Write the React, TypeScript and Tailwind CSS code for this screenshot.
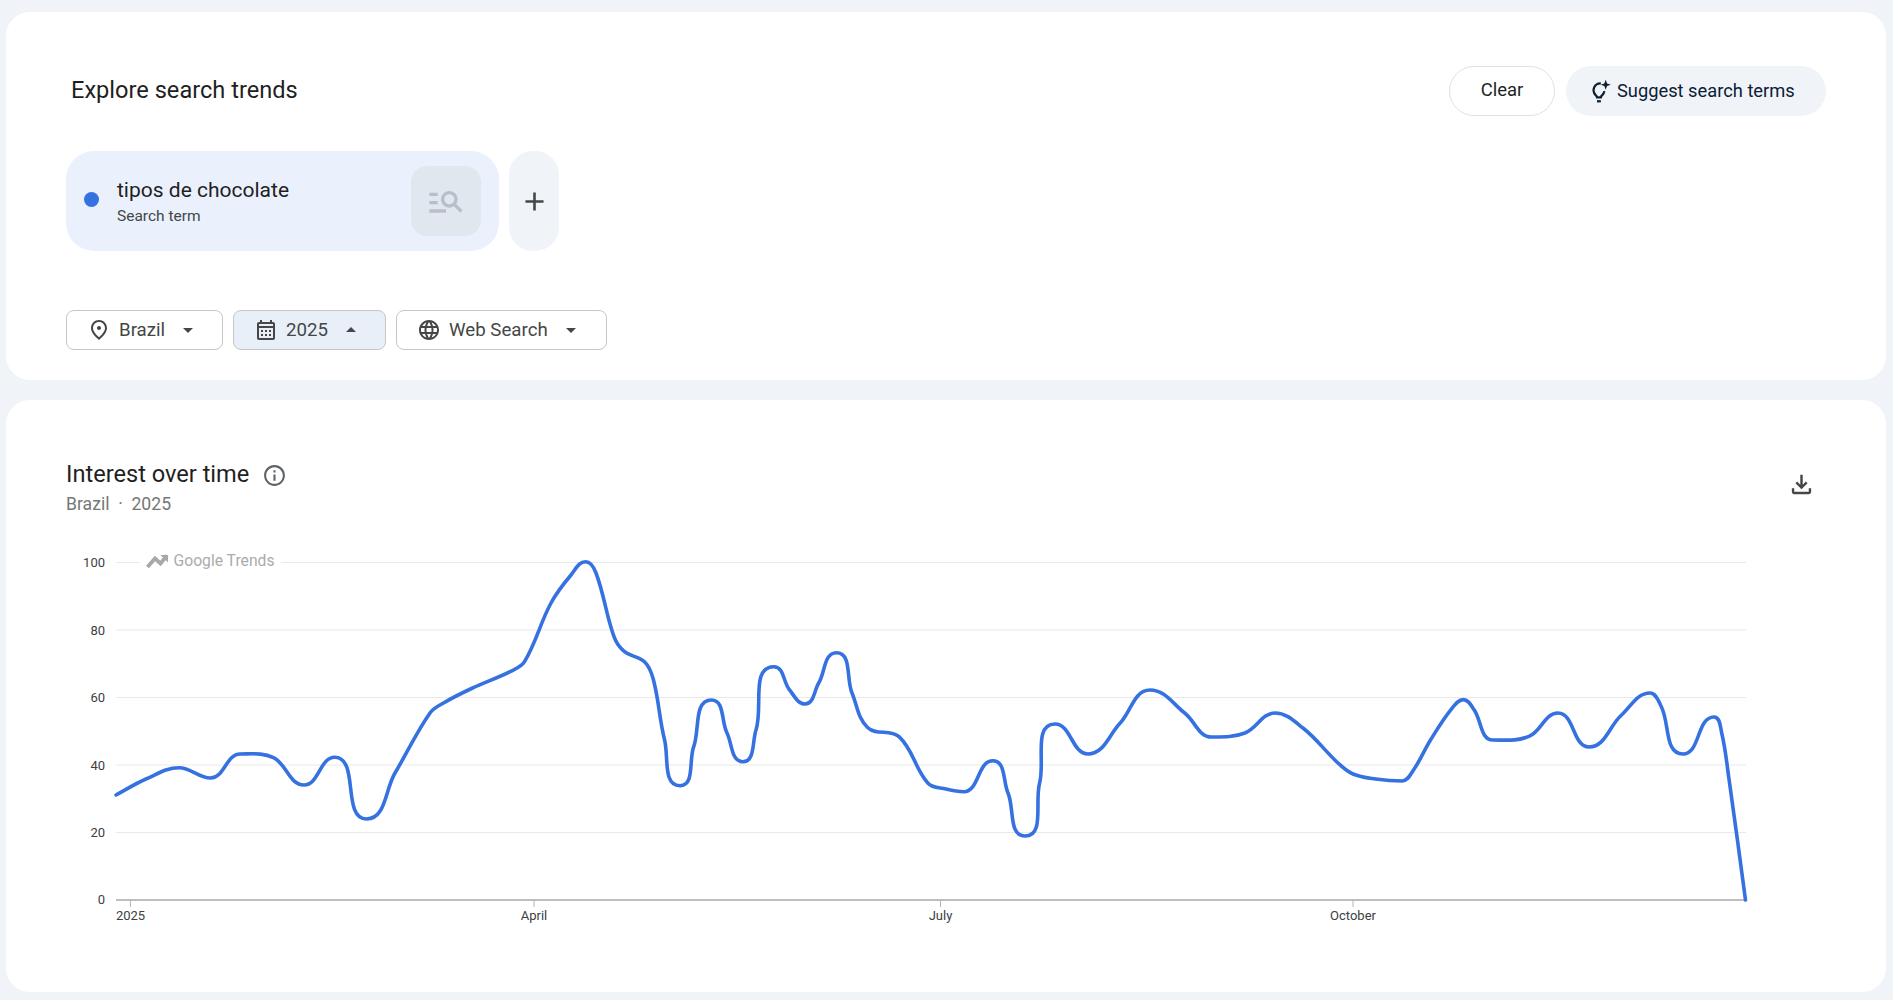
const FONT = "font-['Roboto',sans-serif]";

type Pt = [number, number];

// chart line, read off the reference in page coordinates
const points: Pt[] = [
  [116, 795], [146, 779], [179, 767.7], [210.6, 778], [240, 754], [273.5, 757.7], [304, 785], [334.7, 757.3],
  [366.5, 819], [395, 773], [430, 713], [444, 702.7], [472.6, 688], [510, 671.7], [524.5, 661.7], [551, 603],
  [571, 575], [585.7, 561.7], [596, 573], [614, 636.7], [624.5, 651.7], [644.5, 661.7], [653.5, 680], [664.6, 740],
  [680, 785.7], [693.7, 746.7], [711.5, 700], [727, 733], [742.8, 761.7], [756, 730], [774, 666.7], [789.6, 690],
  [805, 704], [818.7, 683], [836.5, 652.7], [852, 693], [867.8, 727.7], [899, 736.7], [928, 783.3], [946, 789],
  [963.8, 791.7], [992.8, 760.7], [1008, 793], [1025, 836], [1039.6, 783], [1055, 724], [1088, 754], [1120, 723.3],
  [1150, 690], [1184.7, 713], [1211.5, 737], [1245, 733], [1275, 713], [1303, 728], [1338, 763], [1353, 774],
  [1375.6, 779], [1402, 781], [1413.5, 770], [1430.5, 740], [1451, 709.6], [1463.4, 699.6], [1474, 709.6], [1493, 740],
  [1529, 736.4], [1558, 713], [1589, 747], [1621.5, 715], [1650, 693], [1661, 706], [1683, 754], [1714, 717],
  [1721.7, 733], [1729, 779], [1745.5, 900],
];

function tangent(pts: Pt[], i: number): Pt {
  const a = pts[Math.max(i - 1, 0)];
  const b = pts[i];
  const c = pts[Math.min(i + 1, pts.length - 1)];
  // flat at peaks and dips, the way the chart rounds them
  if (i > 0 && i < pts.length - 1 && (b[1] - a[1]) * (c[1] - b[1]) < 0) return [1, 0];
  const dx = c[0] - a[0];
  const dy = c[1] - a[1];
  const len = Math.hypot(dx, dy);
  return [dx / len, dy / len];
}

function smoothPath(pts: Pt[]) {
  let d = `M${pts[0][0]} ${pts[0][1]}`;
  for (let i = 0; i < pts.length - 1; i++) {
    const p1 = pts[i];
    const p2 = pts[i + 1];
    const t1 = tangent(pts, i);
    const t2 = tangent(pts, i + 1);
    const k = Math.hypot(p2[0] - p1[0], p2[1] - p1[1]) * 0.36;
    d += `C${(p1[0] + t1[0] * k).toFixed(1)} ${(p1[1] + t1[1] * k).toFixed(1)} ${(p2[0] - t2[0] * k).toFixed(1)} ${(p2[1] - t2[1] * k).toFixed(1)} ${p2[0]} ${p2[1]}`;
  }
  return d;
}

function Icon({ d, className }: { d: string; className: string }) {
  return (
    <svg viewBox="0 0 24 24" className={className} fill="currentColor">
      <path d={d} />
    </svg>
  );
}

const CARET_DOWN = "M7 10l5 5 5-5z";
const CARET_UP = "M7 14l5-5 5 5z";
const PIN = "M12 12c-1.1 0-2-.9-2-2s.9-2 2-2 2 .9 2 2-.9 2-2 2zm6-1.8C18 6.57 15.35 4 12 4s-6 2.57-6 6.2c0 2.34 1.95 5.44 6 9.14 4.05-3.7 6-6.8 6-9.14zM12 2c4.2 0 8 3.22 8 8.2 0 3.32-2.67 7.25-8 11.8-5.33-4.55-8-8.48-8-11.8C4 5.22 7.8 2 12 2z";
const CALENDAR = "M19 4h-1V2h-2v2H8V2H6v2H5c-1.11 0-1.99.9-1.99 2L3 20c0 1.1.89 2 2 2h14c1.1 0 2-.9 2-2V6c0-1.1-.9-2-2-2zm0 16H5V10h14v10zm0-12H5V6h14v2zM9 14H7v-2h2v2zm4 0h-2v-2h2v2zm4 0h-2v-2h2v2zm-8 4H7v-2h2v2zm4 0h-2v-2h2v2zm4 0h-2v-2h2v2z";
const GLOBE = "M11.99 2C6.47 2 2 6.48 2 12s4.47 10 9.99 10C17.52 22 22 17.52 22 12S17.52 2 11.99 2zm6.93 6h-2.95c-.32-1.25-.78-2.45-1.38-3.56 1.84.63 3.37 1.91 4.33 3.56zM12 4.04c.83 1.2 1.48 2.53 1.91 3.96h-3.82c.43-1.43 1.08-2.76 1.91-3.96zM4.26 14C4.1 13.36 4 12.69 4 12s.1-1.36.26-2h3.38c-.08.66-.14 1.32-.14 2s.06 1.34.14 2H4.26zm.82 2h2.95c.32 1.25.78 2.45 1.38 3.56-1.84-.63-3.37-1.9-4.33-3.56zm2.95-8H5.08c.96-1.66 2.49-2.93 4.33-3.56C8.81 5.55 8.35 6.75 8.03 8zM12 19.96c-.83-1.2-1.48-2.53-1.91-3.96h3.82c-.43 1.43-1.08 2.76-1.91 3.96zM14.34 14H9.66c-.09-.66-.16-1.32-.16-2s.07-1.35.16-2h4.68c.09.65.16 1.32.16 2s-.07 1.34-.16 2zm.25 5.56c.6-1.11 1.06-2.31 1.38-3.56h2.95c-.96 1.65-2.49 2.93-4.33 3.56zM16.36 14c.08-.66.14-1.32.14-2s-.06-1.34-.14-2h3.38c.16.64.26 1.31.26 2s-.1 1.36-.26 2h-3.38z";
const MANAGE_SEARCH = "M7 9H2V7h5v2zm0 3H2v2h5v-2zm13.59 7-3.83-3.83c-.8.52-1.74.83-2.76.83-2.76 0-5-2.24-5-5s2.24-5 5-5 5 2.24 5 5c0 1.02-.31 1.96-.83 2.75L22 17.59 20.59 19zM17 11c0-1.65-1.35-3-3-3s-3 1.35-3 3 1.35 3 3 3 3-1.35 3-3zM2 19h10v-2H2v2z";
const PLUS = "M19 13h-6v6h-2v-6H5v-2h6V5h2v6h6v2z";
const INFO = "M11 7h2v2h-2zm0 4h2v6h-2zm1-9C6.48 2 2 6.48 2 12s4.48 10 10 10 10-4.48 10-10S17.52 2 12 2zm0 18c-4.41 0-8-3.59-8-8s3.59-8 8-8 8 3.59 8 8-3.59 8-8 8z";
const DOWNLOAD = "M12 16l-5-5 1.4-1.45 2.6 2.6V4h2v8.15l2.6-2.6L17 11l-5 5zm-6 4c-.55 0-1.02-.2-1.41-.59C4.2 19.02 4 18.55 4 18v-3h2v3h12v-3h2v3c0 .55-.2 1.02-.59 1.41-.39.39-.86.59-1.41.59H6z";

function FilterButton({ icon, label, caret, active, className }: { icon: string; label: string; caret: string; active?: boolean; className: string }) {
  return (
    <button className={`h-10 flex items-center rounded-lg border border-[#c4c7c5] text-[18.7px] text-[#444746] ${active ? "bg-[#e8eff9]" : "bg-white"} ${className}`}>
      <Icon d={icon} className="w-6 h-6 shrink-0" />
      <span className="ml-2">{label}</span>
      <Icon d={caret} className="w-6 h-6 ml-[11px] shrink-0" />
    </button>
  );
}

function Chart() {
  const ticks = [
    { label: "100", y: 562.5 },
    { label: "80", y: 630 },
    { label: "60", y: 697.5 },
    { label: "40", y: 765 },
    { label: "20", y: 832.5 },
  ];
  const months = [
    { label: "2025", x: 130.5 },
    { label: "April", x: 534 },
    { label: "July", x: 940.5 },
    { label: "October", x: 1353 },
  ];
  return (
    <svg viewBox="66 540 1700 400" className="w-[1700px] h-[400px] mt-6 block">
      {ticks.slice(1).map((t) => (
        <line key={t.label} x1="116" x2="1746" y1={t.y} y2={t.y} stroke="#e9e9e9" strokeWidth="1" />
      ))}
      <line x1="116" x2="140" y1="562.5" y2="562.5" stroke="#e9e9e9" />
      <line x1="281" x2="1746" y1="562.5" y2="562.5" stroke="#e9e9e9" />
      {ticks.map((t) => (
        <text key={t.label} x="105" y={t.y + 4.5} textAnchor="end" fontSize="13" fill="#3c4043" fontFamily="Roboto, sans-serif">
          {t.label}
        </text>
      ))}
      <text x="105" y="903.5" textAnchor="end" fontSize="13" fill="#3c4043" fontFamily="Roboto, sans-serif">0</text>

      <path d="M147.5 567l7.5-8.5 5.5 5 6.5-8" fill="none" stroke="#a8a8a8" strokeWidth="3.8" />
      <path d="M160.5 555h7.5v7.5z" fill="#a8a8a8" />
      <text x="173.5" y="566" fontSize="15.7" fill="#ababab" fontFamily="Roboto, sans-serif">Google Trends</text>

      <line x1="116" x2="1746" y1="900" y2="900" stroke="#a8a8a8" strokeWidth="1.5" />
      {months.map((m) => (
        <g key={m.label}>
          <line x1={m.x} x2={m.x} y1="900" y2="907" stroke="#b5b5b5" />
          <text x={m.x} y="920" textAnchor="middle" fontSize="13" fill="#3c4043" fontFamily="Roboto, sans-serif">
            {m.label}
          </text>
        </g>
      ))}

      <path d={smoothPath(points)} fill="none" stroke="#3571e0" strokeWidth="3.6" strokeLinejoin="round" strokeLinecap="round" />
    </svg>
  );
}

export default function App() {
  return (
    <div className={`min-h-screen h-[1000px] overflow-hidden bg-[#f0f4f9] pl-[6px] pr-[7px] pt-3 ${FONT}`}>
      <section className="h-[368px] bg-white rounded-[24px] pt-[54px] pl-[60px] pr-[60px]">
        <div className="h-[50px] flex items-center justify-between">
          <h1 className="ml-[5px] text-[23.6px] text-[#1f1f1f] font-normal">Explore search trends</h1>
          <div className="flex gap-[11px]">
            <button className="h-[50px] w-[106px] rounded-full border border-[#dfe1e5] text-[18.5px] text-[#1f1f1f] bg-white">Clear</button>
            <button className="h-[50px] w-[260px] rounded-full bg-[#f0f4f9] flex items-center pl-[20px] text-[18.3px] text-[#0b2035]">
              <svg viewBox="0 0 24 24" className="w-[27px] h-[27px] shrink-0" fill="none" stroke="currentColor" strokeWidth="2">
                <path d="M13.2 4.9A6 6 0 0 0 8.4 15c.8.7 1.3 1.4 1.4 2.3h3.4c.1-.9.6-1.6 1.4-2.3a6 6 0 0 0 1.7-3.4" />
                <path d="M9.8 20.7h3.4" />
                <path d="M17.5 1.5l1.2 3.3 3.3 1.2-3.3 1.2-1.2 3.3-1.2-3.3L13 6l3.3-1.2z" fill="currentColor" stroke="none" />
              </svg>
              <span className="ml-[4px]">Suggest search terms</span>
            </button>
          </div>
        </div>

        <div className="flex gap-[10px] mt-[35px]">
          <div className="w-[433px] h-[100px] rounded-[28px] bg-[#eaf1fd] flex items-center pl-[18px] pr-[18px]">
            <span className="w-[15px] h-[15px] rounded-full bg-[#3571e0] shrink-0 -mt-[3px]" />
            <div className="ml-[18px] flex-1">
              <div className="text-[21px] leading-[26px] text-[#1f1f1f]">tipos de chocolate</div>
              <div className="text-[15.5px] leading-[20px] mt-[3px] text-[#444746]">Search term</div>
            </div>
            <div className="w-[70px] h-[70px] rounded-2xl bg-[#e1e7ef] flex items-center justify-center">
              <Icon d={MANAGE_SEARCH} className="w-10 h-10 text-[#b9bfc8]" />
            </div>
          </div>
          <div className="w-[50px] h-[100px] rounded-[24px] bg-[#f0f4f9] flex items-center justify-center text-[#444746]">
            <Icon d={PLUS} className="w-[31px] h-[31px]" />
          </div>
        </div>

        <div className="flex gap-[10px] mt-[59px]">
          <FilterButton icon={PIN} label="Brazil" caret={CARET_DOWN} className="w-[157px] pl-[20px]" />
          <FilterButton icon={CALENDAR} label="2025" caret={CARET_UP} active className="w-[153px] pl-[20px]" />
          <FilterButton icon={GLOBE} label="Web Search" caret={CARET_DOWN} className="w-[211px] pl-[20px]" />
        </div>
      </section>

      <section className="h-[592px] mt-5 bg-white rounded-[24px] pt-[60px] pl-[60px] pr-[70px]">
        <div className="flex justify-between items-start">
          <div>
            <div className="h-8 flex items-center -mt-[1px]">
              <h2 className="text-[23.6px] text-[#1f1f1f] font-normal">Interest over time</h2>
              <Icon d={INFO} className="w-[25px] h-[25px] ml-[13px] text-[#5f6368]" />
            </div>
            <div className="h-6 mt-[1px] flex items-center text-[17.6px] text-[#747775] whitespace-pre">Brazil  ·  2025</div>
          </div>
          <Icon d={DOWNLOAD} className="w-[29px] h-[29px] mt-[10px] text-[#444746]" />
        </div>
        <Chart />
      </section>
    </div>
  );
}
